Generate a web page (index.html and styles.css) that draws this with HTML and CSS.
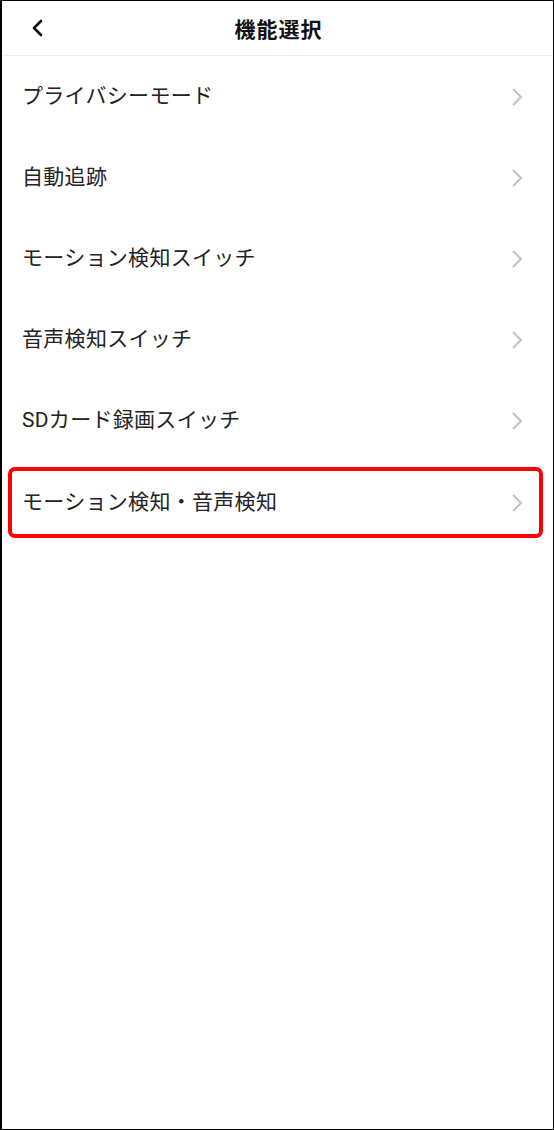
FILE: index.html
```html
<!DOCTYPE html>
<html lang="ja">
<head>
<meta charset="utf-8">
<link rel="stylesheet" href="styles.css">
</head>
<body>
<div class="frame">
  <header class="header">
    <span class="back">
      <svg width="14" height="18" viewBox="0 0 14 18"><path d="M11 2 L4 9 L11 16" fill="none" stroke="#111" stroke-width="2.6" stroke-linecap="round" stroke-linejoin="round"/></svg>
    </span>
    <h1 class="title">機能選択</h1>
  </header>
  <ul class="list">
    <li class="row"><span class="label">プライバシーモード</span><span class="chev"><svg width="12" height="20" viewBox="0 0 12 20"><path d="M2 2 L10 10 L2 18" fill="none" stroke="#c2c2c2" stroke-width="2"/></svg></span></li>
    <li class="row"><span class="label">自動追跡</span><span class="chev"><svg width="12" height="20" viewBox="0 0 12 20"><path d="M2 2 L10 10 L2 18" fill="none" stroke="#c2c2c2" stroke-width="2"/></svg></span></li>
    <li class="row"><span class="label">モーション検知スイッチ</span><span class="chev"><svg width="12" height="20" viewBox="0 0 12 20"><path d="M2 2 L10 10 L2 18" fill="none" stroke="#c2c2c2" stroke-width="2"/></svg></span></li>
    <li class="row"><span class="label">音声検知スイッチ</span><span class="chev"><svg width="12" height="20" viewBox="0 0 12 20"><path d="M2 2 L10 10 L2 18" fill="none" stroke="#c2c2c2" stroke-width="2"/></svg></span></li>
    <li class="row"><span class="label">SDカード録画スイッチ</span><span class="chev"><svg width="12" height="20" viewBox="0 0 12 20"><path d="M2 2 L10 10 L2 18" fill="none" stroke="#c2c2c2" stroke-width="2"/></svg></span></li>
    <li class="row highlight"><span class="label">モーション検知・音声検知</span><span class="chev"><svg width="12" height="20" viewBox="0 0 12 20"><path d="M2 2 L10 10 L2 18" fill="none" stroke="#c2c2c2" stroke-width="2"/></svg></span></li>
  </ul>
</div>
</body>
</html>
```
FILE: styles.css
```css
* { box-sizing: border-box; }
html, body { margin: 0; padding: 0; background: #fff; }
body { font-family: Roboto, "Noto Sans CJK JP", sans-serif; color: #222; }
.frame {
  width: 554px;
  height: 1130px;
  border: 1px solid #000;
  border-left-width: 2px;
  overflow: hidden;
}
.header {
  height: 55px;
  border-bottom: 1px solid #eeeeee;
  display: flex;
  align-items: center;
  justify-content: center;
  position: relative;
}
.back {
  position: absolute;
  left: 28px;
  top: 18px;
  display: flex;
}
.title {
  margin: 0 0 1px;
  font-size: 21px;
  font-weight: 700;
  color: #111;
  letter-spacing: 1px;
  padding-left: 2px;
}
.list {
  list-style: none;
  margin: 0;
  padding: 0;
}
.row {
  height: 81px;
  display: flex;
  align-items: center;
  justify-content: space-between;
  padding: 0 30px 0 20px;
}
.label {
  font-size: 21px;
  line-height: 26px;
  margin-bottom: 1px;
  letter-spacing: 0.3px;
  color: #222;
}
.chev { display: flex; }
.highlight {
  margin: 6px 10px 0 6px;
  border: 4px solid #ff0000;
  border-radius: 7px;
  height: 71px;
  padding: 0 16px 0 10px;
}
```
